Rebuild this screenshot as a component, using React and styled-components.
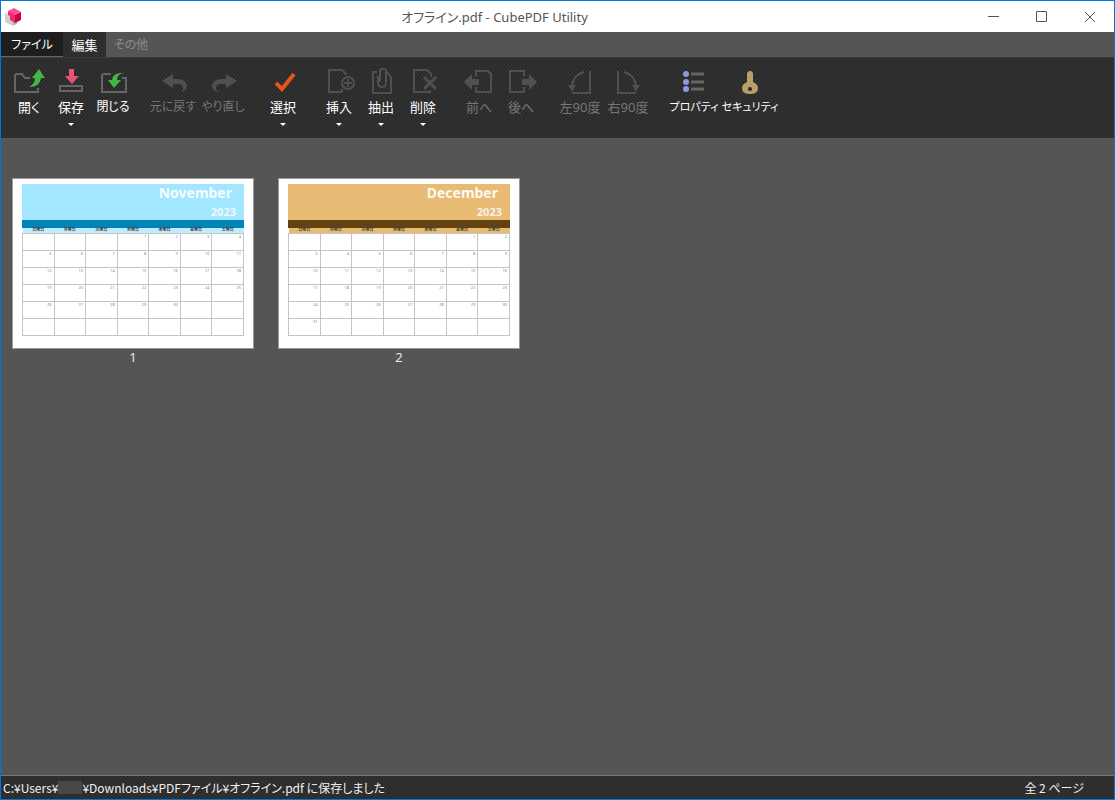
import styled, { createGlobalStyle, css } from "styled-components";

const GlobalStyle = createGlobalStyle`
  * {
    box-sizing: border-box;
  }

  body {
    margin: 0;
    background: #555;
    font-family: 'Noto Sans', 'Noto Sans CJK JP', sans-serif;
    font-size: 13px;
    font-feature-settings: 'palt';
  }

  button {
    font-family: inherit;
    font-feature-settings: inherit;
  }
`;

const weave = css`
  background-color: #323232;
  background-image:
    linear-gradient(45deg, #2a2a2a 25%, transparent 25%, transparent 75%, #2a2a2a 75%),
    linear-gradient(45deg, #2a2a2a 25%, transparent 25%, transparent 75%, #2a2a2a 75%);
  background-size: 4px 4px;
  background-position: 0 0, 2px 2px;
`;

const Window = styled.div`
  min-height: 100vh;
  display: flex;
  flex-direction: column;
  border: 1px solid #0078d7;
  background: #555;
`;

const TitleBar = styled.header`
  height: 31px;
  display: grid;
  grid-template-columns: 1fr auto 1fr;
  align-items: center;
  background: #fff;
`;

const AppIcon = styled.svg`
  width: 16px;
  height: 18px;
  margin-left: 4px;
`;

const WindowTitle = styled.h1`
  margin: 0;
  font-size: 13px;
  font-weight: 400;
  color: #555;
  padding-right: 126px;
`;

const WindowButtons = styled.div`
  display: flex;
  justify-content: flex-end;
  height: 31px;
`;

const WindowButton = styled.button`
  width: 48px;
  padding: 0;
  border: 0;
  background: none;
  color: #555;
  display: flex;
  align-items: center;
  justify-content: center;

  svg {
    width: 12px;
    height: 12px;
  }
`;

const TabBar = styled.nav`
  height: 25px;
  display: flex;
  background: #555;
`;

const tabWidths = { file: "62px", active: "43px", plain: "50px" };

const Tab = styled.button`
  width: ${({ $kind }) => tabWidths[$kind]};
  padding: 1px 0 0;
  border: 0;
  font-size: ${({ $kind }) => ($kind === "active" ? "13px" : "12px")};
  line-height: 20px;
  white-space: nowrap;
  color: ${({ $kind }) => ($kind === "plain" ? "#8c8c8c" : "#fff")};
  background: none;

  ${({ $kind }) => $kind === "file" && css`
    background: #1e1e1e;
    border-bottom: 1px solid #666;
  `}

  ${({ $kind }) => $kind === "active" && weave}
`;

const Ribbon = styled.div`
  height: 81px;
  display: flex;
  gap: 14px;
  padding: 9px 7px 0;
  border-top: 1px solid #3a3a3a;
  ${weave}
`;

const RibbonGroup = styled.div`
  display: flex;
`;

const RibbonButton = styled.button`
  width: ${({ $width }) => $width}px;
  height: 64px;
  padding: 0;
  border: 0;
  background: none;
  display: flex;
  flex-direction: column;
  align-items: center;
  color: ${({ disabled }) => (disabled ? "#777" : "#fff")};
  font-size: ${({ $size }) => $size || 13}px;
  line-height: 18px;
  white-space: nowrap;

  > svg {
    flex: none;
    width: 32px;
    height: 30px;
    margin-bottom: 1px;
  }
`;

const Arrow = styled.span`
  margin-top: 7px;
  border: 3px solid transparent;
  border-top: 3px solid #fff;
  border-bottom: 0;
`;

const Pages = styled.main`
  flex: 1;
  display: flex;
  flex-wrap: wrap;
  align-content: flex-start;
  gap: 24px;
  padding: 40px 11px;
`;

const Page = styled.figure`
  margin: 0;
  width: 242px;
`;

const Caption = styled.figcaption`
  text-align: center;
  color: #e8e8e8;
  font-size: 13px;
  line-height: 16px;
`;

const Sheet = styled.div`
  height: 171px;
  padding: 5px 9px;
  border: 1px solid #999;
  background: #fff;
`;

const Banner = styled.div`
  height: 44px;
  padding: 0 8px 0 0;
  text-align: right;
  font-weight: 700;
  color: #fff;
  background: ${({ $color }) => $color};
  border-bottom: 8px solid ${({ $bar }) => $bar};
`;

const Month = styled.div`
  padding-right: 4px;
  font-size: 14px;
  line-height: 18px;
  opacity: 0.9;
`;

const Year = styled.div`
  font-size: 11px;
  line-height: 20px;
  opacity: 0.8;
`;

const Calendar = styled.table`
  width: 100%;
  table-layout: fixed;
  border-collapse: collapse;
  font-size: 4px;
  line-height: 4px;

  th {
    height: 5px;
    padding: 0;
    color: #444;
    font-size: 4px;
    background: ${({ $head }) => $head};
  }

  td {
    height: 17px;
    padding: 1px 2px;
    border: 1px solid #c4c4c4;
    text-align: right;
    vertical-align: top;
    color: #888;
  }
`;

const StatusBar = styled.footer`
  height: 24px;
  display: flex;
  justify-content: space-between;
  align-items: center;
  padding: 0 30px 0 2px;
  border-top: 1px solid #777;
  color: #f0f0f0;
  font-family: 'Noto Sans CJK JP', sans-serif;
  font-size: 12px;
  ${weave}
`;

const Path = styled.span`
  display: flex;
  align-items: center;
  white-space: pre;
`;

const Masked = styled.span`
  width: 24px;
  height: 13px;
  background: #484848;
`;

const line = { fill: "none", stroke: "#666", strokeWidth: 2 };
const dim = { fill: "none", stroke: "#505050", strokeWidth: 2 };

const icons = {
  open: (
    <>
      <path {...line} d="M25 21v4H2V9q0-2 2-2h5l3 4h5" />
      <path fill="#43b649" d="M26 2l6 9h-4q-1 9-12 9 6-3 6-9h-3z" />
    </>
  ),
  save: (
    <>
      <path {...line} d="M5 19h22v5H5z" />
      <path fill="#ea5277" d="M14 2h5v7h5l-7 8-7-8h4z" />
    </>
  ),
  close: (
    <>
      <path {...line} d="M14 7H7Q5 7 5 9v16h24V11h-4" />
      <path fill="#43b649" d="M27 6q-7 1-7 7h4l-7 8-6-8h4q1-8 12-7z" />
    </>
  ),
  undo: <path fill="#505050" d="M5 14l11-7v5h5q9 1 9 7 0 5-7 6 4-2 3-5-1-3-5-3h-5v4z" />,
  redo: <path fill="#505050" d="M30 14L19 7v5h-5q-9 1-9 7 0 5 7 6-4-2-3-5 1-3 5-3h5v4z" />,
  select: <path fill="none" stroke="#e3551c" strokeWidth="4" d="M9 16l6 6L27 7" />,
  insert: (
    <>
      <path {...dim} d="M19 25H6V3h13l4 4v1M19 25v-3" />
      <circle {...dim} cx="25" cy="16" r="6" />
      <path {...dim} d="M25 12v8M21 16h8" />
    </>
  ),
  extract: (
    <>
      <path {...dim} d="M12 5H8v21h18V10l-4-5h-1" />
      <path {...dim} d="M13 9v7q0 4 4 4t4-4V4q0-2-2-2h-2q-2 0-2 2v11" />
    </>
  ),
  remove: (
    <>
      <path {...dim} d="M17 25H7V3h13l4 4v3M17 25h6v-2" />
      <path {...dim} strokeWidth="3" d="M17 10l12 12M29 10L17 22" />
    </>
  ),
  before: (
    <>
      <path {...dim} d="M13 9V4h12l3 3v18H13v-5" />
      <path fill="#505050" d="M1 15l8-8v5h7v6H9v5z" />
    </>
  ),
  after: (
    <>
      <path {...dim} d="M19 9V4H5v21h14v-5" />
      <path fill="#505050" d="M32 15l-8-8v5h-7v6h7v5z" />
    </>
  ),
  left: (
    <>
      <path {...dim} d="M26 4v22H8M20 5Q9 8 8 19" />
      <path fill="#505050" d="M4 18h8l-4 7z" />
    </>
  ),
  right: (
    <>
      <path {...dim} d="M6 4v22h18M12 5q11 3 12 14" />
      <path fill="#505050" d="M28 18h-8l4 7z" />
    </>
  ),
  props: (
    <>
      <path stroke="#666" strokeWidth="3" d="M13 7h13M13 15h13M13 22h13" />
      <g fill="#8c9be0">
        <circle cx="8" cy="7" r="3" />
        <circle cx="8" cy="15" r="3" />
        <circle cx="8" cy="22" r="3" />
      </g>
    </>
  ),
  security: (
    <>
      <path fill="#b89e68" d="M13 7q0-3 3-3t3 3v8q5 2 5 6 0 6-8 6t-8-6q0-4 5-6z" />
      <circle cx="16" cy="22" r="2" fill="#292929" />
    </>
  ),
};

const groups = [
  {
    width: 42,
    items: [
      { label: "開く", icon: "open" },
      { label: "保存", icon: "save", menu: true },
      { label: "閉じる", icon: "close", size: 12 },
    ],
  },
  {
    width: 50,
    items: [
      { label: "元に戻す", icon: "undo", size: 12, off: true },
      { label: "やり直し", icon: "redo", size: 12, off: true },
    ],
  },
  { width: 42, items: [{ label: "選択", icon: "select", menu: true }] },
  {
    width: 42,
    items: [
      { label: "挿入", icon: "insert", menu: true },
      { label: "抽出", icon: "extract", menu: true },
      { label: "削除", icon: "remove", menu: true },
    ],
  },
  {
    width: 42,
    items: [
      { label: "前へ", icon: "before", off: true },
      { label: "後へ", icon: "after", off: true },
    ],
  },
  {
    width: 48,
    items: [
      { label: "左90度", icon: "left", off: true },
      { label: "右90度", icon: "right", off: true },
    ],
  },
  {
    width: 56,
    items: [
      { label: "プロパティ", icon: "props", size: 11 },
      { label: "セキュリティ", icon: "security", size: 11 },
    ],
  },
];

const months = [
  { name: "November", first: 3, days: 30, color: "#a3e6ff", bar: "#0083b7", head: "#bfecff" },
  { name: "December", first: 5, days: 31, color: "#e7bb74", bar: "#634211", head: "#e7bb74" },
];

const weekdays = ["日曜日", "月曜日", "火曜日", "水曜日", "木曜日", "金曜日", "土曜日"];

function CalendarPage({ month }) {
  const dayAt = (week, col) => {
    const day = week * 7 + col - month.first + 1;
    return day > 0 && day <= month.days ? day : "";
  };

  return (
    <Sheet>
      <Banner $color={month.color} $bar={month.bar}>
        <Month>{month.name}</Month>
        <Year>2023</Year>
      </Banner>
      <Calendar $head={month.head}>
        <thead>
          <tr>{weekdays.map((d) => <th key={d}>{d}</th>)}</tr>
        </thead>
        <tbody>
          {[0, 1, 2, 3, 4, 5].map((week) => (
            <tr key={week}>
              {weekdays.map((d, col) => <td key={d}>{dayAt(week, col)}</td>)}
            </tr>
          ))}
        </tbody>
      </Calendar>
    </Sheet>
  );
}

export default function App() {
  return (
    <Window lang="ja">
      <GlobalStyle />
      <TitleBar>
        <AppIcon viewBox="0 0 16 18">
          <path fill="#d0d0d0" d="M0 5l8 3v10l-8-4z" />
          <path fill="#b4b4b4" d="M8 18v-6l5 3z" />
          <path fill="#ff4f8b" d="M3 3l6-3 7 4-6 3-4-1z" />
          <path fill="#f02a6c" d="M3 3l7 4v8l-5-3V8L3 7z" />
          <path fill="#c9004f" d="M10 7l6-3v8l-6 3z" />
        </AppIcon>
        <WindowTitle>オフライン.pdf - CubePDF Utility</WindowTitle>
        <WindowButtons>
          <WindowButton aria-label="最小化">
            <svg viewBox="0 0 12 12" stroke="currentColor"><path d="M0 5.5h11" /></svg>
          </WindowButton>
          <WindowButton aria-label="最大化">
            <svg viewBox="0 0 12 12" stroke="currentColor" fill="none"><path d="M.5 .5h10v10H.5z" /></svg>
          </WindowButton>
          <WindowButton aria-label="閉じる">
            <svg viewBox="0 0 12 12" stroke="currentColor"><path d="M1 1l10 10M11 1L1 11" /></svg>
          </WindowButton>
        </WindowButtons>
      </TitleBar>
      <TabBar>
        <Tab $kind="file">ファイル</Tab>
        <Tab $kind="active">編集</Tab>
        <Tab $kind="plain">その他</Tab>
      </TabBar>
      <Ribbon>
        {groups.map((group) => (
          <RibbonGroup key={group.items[0].label}>
            {group.items.map(({ label, icon, size, menu, off }) => (
              <RibbonButton key={label} $width={group.width} $size={size} disabled={off}>
                <svg viewBox="0 0 32 30">{icons[icon]}</svg>
                {label}
                {menu && <Arrow />}
              </RibbonButton>
            ))}
          </RibbonGroup>
        ))}
      </Ribbon>
      <Pages>
        {months.map((month, i) => (
          <Page key={month.name}>
            <CalendarPage month={month} />
            <Caption>{i + 1}</Caption>
          </Page>
        ))}
      </Pages>
      <StatusBar>
        <Path>
          C:¥Users¥<Masked />¥Downloads¥PDFファイル¥オフライン.pdf に保存しました
        </Path>
        <span>全 2 ページ</span>
      </StatusBar>
    </Window>
  );
}
